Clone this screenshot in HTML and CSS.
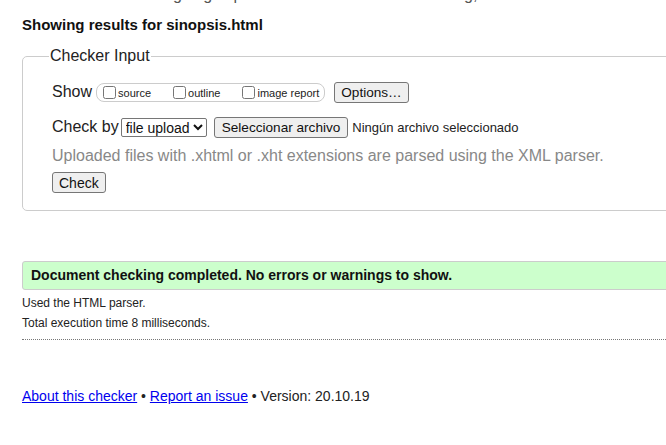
FILE: index.html
```html
<!DOCTYPE html>
<html>
<head>
<meta charset="utf-8">
<link rel="stylesheet" href="styles.css">
</head>
<body>
<div class="page">
  <div class="intro-clip"><p class="intro">This tool is an ongoing experiment in better HTML checking, and its behavior remains subject to change every day</p></div>
  <h2 class="title">Showing results for sinopsis.html</h2>
  <fieldset class="input">
    <legend class="legend">Checker Input</legend>
    <div class="row show-row">
      <span class="label">Show</span>
      <fieldset class="opts">
        <label class="opt"><input type="checkbox" class="cb">source</label>
        <label class="opt"><input type="checkbox" class="cb">outline</label>
        <label class="opt"><input type="checkbox" class="cb">image report</label>
      </fieldset>
      <button class="btn options">Options…</button>
    </div>
    <div class="row check-row">
      <span class="label">Check by</span>
      <select class="sel"><option>file upload</option></select>
      <button class="btn file">Seleccionar archivo</button>
      <span class="nofile">Ningún archivo seleccionado</span>
    </div>
    <p class="hint">Uploaded files with .xhtml or .xht extensions are parsed using the XML parser.</p>
    <button class="btn check">Check</button>
  </fieldset>
  <div class="success">Document checking completed. No errors or warnings to show.</div>
  <p class="meta">Used the HTML parser.</p>
  <p class="meta">Total execution time 8 milliseconds.</p>
  <hr class="dots">
  <p class="footer"><a href="#" class="link">About this checker</a> • <a href="#" class="link">Report an issue</a> • Version: 20.10.19</p>
</div>
</body>
</html>
```
FILE: styles.css
```css
html, body {
  margin: 0;
  padding: 0;
  overflow: hidden;
  background: #fff;
}
body {
  font-family: "Liberation Sans", Arial, sans-serif;
  color: #222;
  width: 666px;
  height: 445px;
}
.page {
  padding-left: 22px;
  width: 720px;
}
.intro-clip {
  height: 5px;
  overflow: hidden;
}
.intro {
  margin: -14px 0 0 0;
  font-size: 16px;
  line-height: 18px;
  color: #555;
  white-space: nowrap;
  padding-left: 30px;
}
.title {
  margin: 0;
  padding-top: 11px;
  font-size: 15px;
  line-height: 18px;
  font-weight: bold;
  color: #111;
}
.input {
  margin: 13px 0 0 0;
  border: 1px solid #ccc;
  border-radius: 5px;
  padding: 15px 29px 17px 29px;
  width: 700px;
}
.legend {
  font-size: 16px;
  color: #222;
  padding: 0 1px;
  margin-left: -3px;
}
.row {
  display: flex;
  align-items: center;
}
.label {
  font-size: 16px;
  color: #222;
}
.show-row {
  height: 24px;
}
.opts {
  display: flex;
  align-items: center;
  margin: 0 0 0 4px;
  padding: 0 5px 0 2px;
  height: 17px;
  border: 1px solid #ccc;
  border-radius: 8px;
  gap: 18px;
}
.opt {
  display: flex;
  align-items: center;
  font-size: 11px;
  color: #222;
  margin-top: 1px;
}
.cb {
  margin: 0 2px 0 4px;
  width: 13px;
  height: 13px;
}
.btn {
  font-family: "Liberation Sans", Arial, sans-serif;
  font-size: 13.33px;
  color: #111;
  background: #efefef;
  border: 1px solid #767676;
  border-radius: 3px;
  padding: 0 6px;
  height: 21px;
}
.options {
  margin-left: 9px;
  font-size: 13.6px;
  padding: 0 6px;
}
.check-row {
  margin-top: 13px;
  height: 20px;
}
.sel {
  font-family: "Liberation Sans", Arial, sans-serif;
  font-size: 14px;
  margin-left: 2px;
  height: 19px;
  border: 1px solid #767676;
  border-radius: 2px;
  background: #fff;
  color: #111;
  padding: 0;
}
.file {
  margin-left: 7px;
  font-size: 13.6px;
  padding: 0 7px;
  height: 21px;
}
.nofile {
  font-size: 13px;
  margin-left: 4px;
  color: #222;
}
.hint {
  margin: 9px 0 0 0;
  font-size: 16px;
  line-height: 20px;
  color: #888;
}
.check {
  margin-top: 6px;
  font-size: 14px;
  padding: 0 6px;
  height: 21px;
}
.success {
  margin-top: 50px;
  background: #ccffcc;
  border: 1px solid #ccc;
  border-radius: 3px;
  height: 27px;
  line-height: 27px;
  padding-left: 8px;
  font-size: 14px;
  font-weight: bold;
  color: #111;
  width: 700px;
}
.meta {
  margin: 6px 0 0 0;
  font-size: 12px;
  line-height: 14px;
  color: #222;
}
.dots {
  margin: 9px 0 0 0;
  border: 0;
  border-top: 1px dotted #777;
  height: 0;
  width: 720px;
}
.footer {
  margin: 48px 0 0 0;
  font-size: 14px;
  line-height: 16px;
  color: #222;
}
.link {
  color: #0000ee;
}
```
